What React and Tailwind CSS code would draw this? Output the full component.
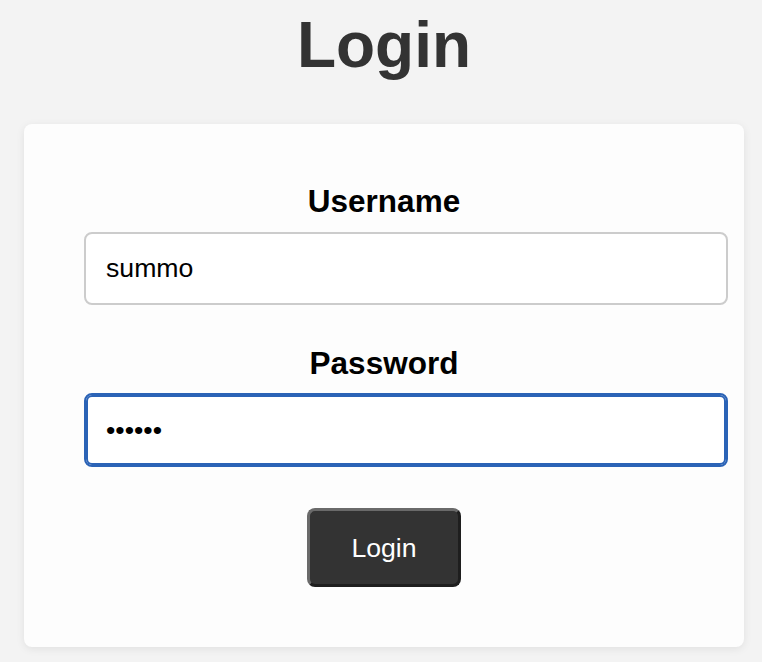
export default function App() {
  return (
    <div className="min-h-screen bg-[#f3f3f3] font-['Liberation_Sans',Arial,sans-serif]">
      <div className="ml-[24px] w-[720px] pt-[8px]">
        <h1 className="text-center text-[64px] leading-[74px] font-bold text-[#333]">Login</h1>
        <form
          className="mt-[42px] bg-[#fdfdfd] rounded-[8px] shadow-[0_2px_8px_rgba(0,0,0,0.08)] px-[60px] pt-[60px] pb-[60px] flex flex-col items-stretch"
          onSubmit={(e) => e.preventDefault()}
        >
          <label className="block text-center text-[31.5px] leading-[35px] font-bold text-black">Username</label>
          <input
            type="text"
            defaultValue="summo"
            className="mt-[13px] w-[644px] h-[73px] px-[20px] border-2 border-[#cccccc] rounded-[8px] bg-white text-[26.67px] text-black outline-none"
          />
          <label className="block mt-[41px] text-center text-[31.5px] leading-[35px] font-bold text-black">Password</label>
          <input
            type="password"
            defaultValue="secret"
            className="mt-[12px] w-[644px] h-[74px] px-[20px] border-2 border-[#2b63b6] ring-2 ring-inset ring-[#2b63b6] rounded-[8px] bg-white text-[26.67px] text-black outline-none"
          />
          <div className="mt-[41px] flex justify-center">
            <button
              type="submit"
              className="w-[154px] h-[79px] rounded-[8px] bg-[#333] text-white text-[26.67px] border-[3px] border-t-[#6a6a6a] border-l-[#6a6a6a] border-r-[#1e1e1e] border-b-[#1e1e1e]"
            >
              Login
            </button>
          </div>
        </form>
      </div>
    </div>
  )
}
